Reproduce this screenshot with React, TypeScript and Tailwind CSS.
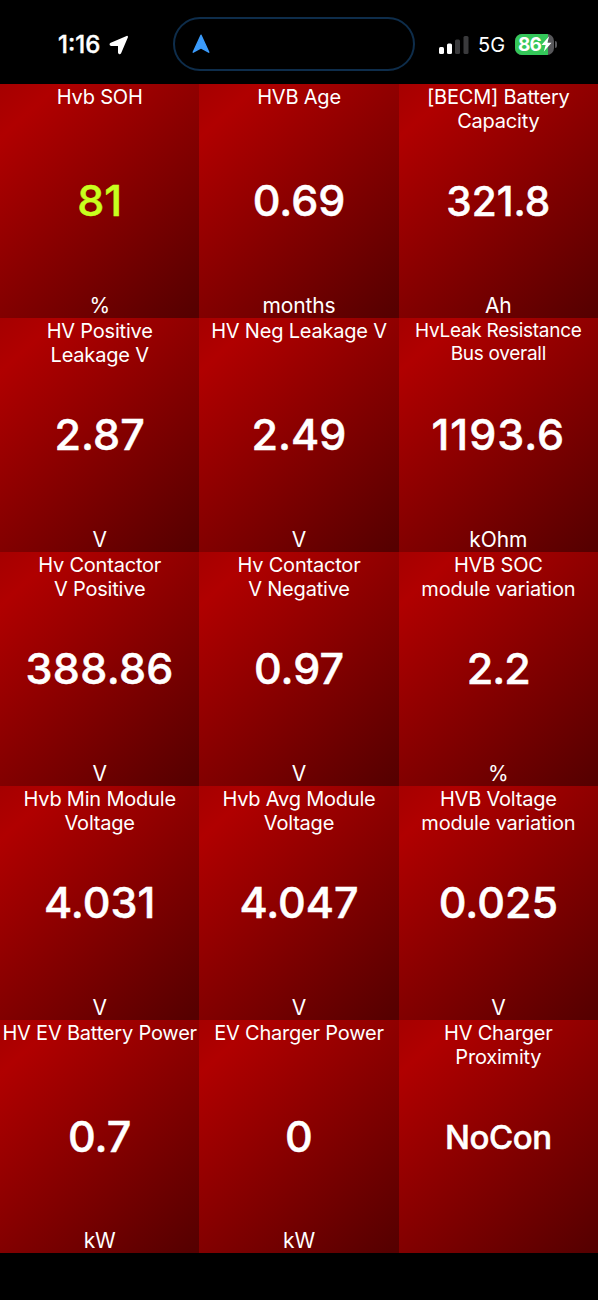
interface Gauge {
  label: string[]
  value: string
  unit: string
  valueClass?: string
  labelClass?: string
}

const gauges: Gauge[] = [
  { label: ['Hvb SOH'], value: '81', unit: '%', valueClass: 'text-[#c8ff1e] text-[43px] font-medium' },
  { label: ['HVB Age'], value: '0.69', unit: 'months' },
  {
    label: ['[BECM] Battery', 'Capacity'],
    value: '321.8',
    unit: 'Ah',
    valueClass: 'text-white text-[40.5px] font-medium pt-0.5',
  },
  { label: ['HV Positive', 'Leakage V'], value: '2.87', unit: 'V' },
  { label: ['HV Neg Leakage V'], value: '2.49', unit: 'V' },
  {
    label: ['HvLeak Resistance', 'Bus overall'],
    value: '1193.6',
    unit: 'kOhm',
    valueClass: 'text-white text-[43px] font-medium tracking-[1px]',
    labelClass: 'text-[19px] leading-[23px] tracking-[-0.28px]',
  },
  {
    label: ['Hv Contactor', 'V Positive'],
    value: '388.86',
    unit: 'V',
    valueClass: 'text-white text-[43px] font-medium tracking-[0.3px]',
  },
  { label: ['Hv Contactor', 'V Negative'], value: '0.97', unit: 'V' },
  {
    label: ['HVB SOC', 'module variation'],
    value: '2.2',
    unit: '%',
    valueClass: 'text-white text-[43px] font-medium tracking-[-1px]',
  },
  { label: ['Hvb Min Module', 'Voltage'], value: '4.031', unit: 'V' },
  { label: ['Hvb Avg Module', 'Voltage'], value: '4.047', unit: 'V' },
  { label: ['HVB Voltage', 'module variation'], value: '0.025', unit: 'V' },
  { label: ['HV EV Battery Power'], value: '0.7', unit: 'kW' },
  { label: ['EV Charger Power'], value: '0', unit: 'kW' },
  {
    label: ['HV Charger', 'Proximity'],
    value: 'NoCon',
    unit: '',
    valueClass: 'text-white text-[33px] font-medium tracking-[-0.4px] pt-px',
  },
]

function StatusBar() {
  return (
    <header className="flex h-[84px] shrink-0 items-center pt-1">
      <div className="flex w-[173px] items-center pl-[58px]">
        <span className="w-[46px] whitespace-nowrap pt-0.5 text-[24px] font-medium leading-none [-webkit-text-stroke:0.4px_currentColor]">
          1:16
        </span>
        <svg className="ml-[5px] mt-px shrink-0" width="20" height="20" viewBox="0 0 20 20" fill="white">
          <path
            d="M18 1.8 11.3 17.6Q10.4 19 10 17.4V10.1H2.4Q.8 9.6 2.2 8.7Z"
            stroke="white"
            strokeWidth="2"
            strokeLinejoin="round"
          />
        </svg>
      </div>
      <div className="flex h-[54px] w-[242px] items-center rounded-full border-2 border-[#0e2d4b] pl-[17px]">
        <svg width="18" height="20" viewBox="0 0 18 20" fill="#3b9bfb">
          <path
            d="M9 1.2 16.8 18.2 9 13.8 1.2 18.2Z"
            stroke="#3b9bfb"
            strokeWidth="1.4"
            strokeLinejoin="round"
          />
        </svg>
      </div>
      <div className="flex items-center pl-[24px]">
        <svg width="30" height="19" viewBox="0 0 30 19" fill="white">
          <rect x="0" y="12" width="5" height="7" rx="1.5" />
          <rect x="8" y="8.5" width="5" height="10.5" rx="1.5" />
          <rect x="16" y="4.5" width="5" height="14.5" rx="1.5" fill="#3a3a3c" />
          <rect x="24.5" y="1" width="5" height="18" rx="1.5" fill="#3a3a3c" />
        </svg>
        <span className="ml-[9px] w-[27px] pt-0.5 text-[20px] leading-none">5G</span>
        <div className="relative ml-[10px] flex h-[21px] w-[39px] items-center overflow-hidden rounded-[7px] bg-[#57575a]">
          <div className="absolute inset-y-0 left-0 w-[33px] bg-[#34c759]" />
          <span className="relative pl-[3px] text-[19px] font-bold leading-none tracking-[-0.8px]">86</span>
          <svg className="relative" width="11" height="16" viewBox="0 0 10 15" fill="white">
            <path d="M7.5.2.3 8.4H4.2L2.4 14.8 9.7 6.3H5.8Z" />
          </svg>
        </div>
        <div className="ml-px h-[7px] w-[2px] rounded-r-full bg-[#57575a]" />
      </div>
    </header>
  )
}

function GaugeCell({ gauge }: { gauge: Gauge }) {
  return (
    <div className="grid grid-rows-[80px_1fr_80px] bg-[linear-gradient(138deg,#a60000_0%,#b00000_13%,#560000_98%)] text-center">
      <div
        className={`whitespace-nowrap pt-px ${
          gauge.labelClass ?? 'text-[20px] leading-[24px] tracking-[-0.2px]'
        }`}
      >
        {gauge.label.map((line) => (
          <div key={line}>{line}</div>
        ))}
      </div>
      <div
        className={`flex items-center justify-center leading-none [-webkit-text-stroke:0.5px_currentColor] ${
          gauge.valueClass ?? 'text-white text-[43px] font-medium'
        }`}
      >
        {gauge.value}
      </div>
      <div className="flex items-end justify-center text-[21px] leading-[24px] tracking-[-0.1px]">
        {gauge.unit}
      </div>
    </div>
  )
}

export default function App() {
  return (
    <div className="flex h-[1300px] w-[598px] flex-col bg-black font-[Inter,sans-serif] text-white">
      <StatusBar />
      <main className="grid h-[1169.5px] grid-cols-3 grid-rows-5">
        {gauges.map((gauge) => (
          <GaugeCell key={gauge.label.join(' ')} gauge={gauge} />
        ))}
      </main>
    </div>
  )
}
